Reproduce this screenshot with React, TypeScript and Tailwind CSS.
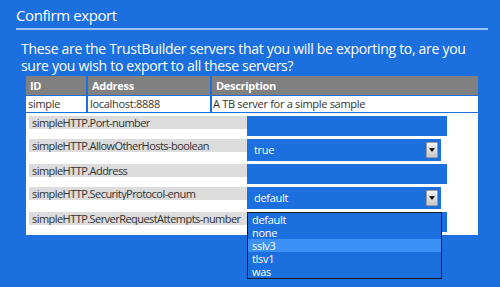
import React from "react";

const fields = [
  { label: "simpleHTTP.Port-number", kind: "input" },
  { label: "simpleHTTP.AllowOtherHosts-boolean", kind: "select", value: "true" },
  { label: "simpleHTTP.Address", kind: "input" },
  { label: "simpleHTTP.SecurityProtocol-enum", kind: "select", value: "default" },
  { label: "simpleHTTP.ServerRequestAttempts-number", kind: "input" },
];

const options = ["default", "none", "sslv3", "tlsv1", "was"];

function SelectArrow() {
  return (
    <div className="w-[12px] h-[16px] mr-[3px] rounded-[1px] bg-gradient-to-b from-[#f4f4f4] to-[#c8c8c8] border border-[#9a9a9a] flex items-center justify-center">
      <svg width="6" height="4" viewBox="0 0 6 4">
        <path d="M0 0h6L3 4z" fill="#111" />
      </svg>
    </div>
  );
}

export default function App() {
  return (
    <div
      className="w-[500px] h-[287px] bg-[#1b6fde] overflow-hidden text-white relative"
      style={{ fontFamily: '"Open Sans", "Noto Sans", sans-serif' }}
    >
      {/* Title */}
      <div className="px-[16px] pt-[4px]">
        <h2 className="text-[15px] tracking-[-0.4px] leading-[22px]">Confirm export</h2>
        <div className="h-[2px] w-[472px] bg-[#9ec3f2] mt-[2px]" />
      </div>

      <p className="ml-[21px] mt-[10px] text-[14px] tracking-[-0.3px] leading-[17px] w-[470px]">
        These are the TrustBuilder servers that you will be exporting to, are you sure you wish to export to all these servers?
      </p>

      {/* Servers table */}
      <div className="ml-[26px] mt-[2px] w-[452px] flex flex-col gap-[1px] text-[11px] tracking-[-0.3px]">
        <div className="flex gap-[2px] h-[19px] font-bold">
          <div className="w-[60px] bg-[#808080] px-[4px] leading-[19px]">ID</div>
          <div className="w-[122px] bg-[#808080] px-[4px] leading-[19px]">Address</div>
          <div className="flex-1 bg-[#808080] px-[4px] leading-[19px]">Description</div>
        </div>
        <div className="flex gap-[2px] h-[16px] text-[#333]">
          <div className="w-[60px] bg-white px-[2px] leading-[16px]">simple</div>
          <div className="w-[122px] bg-white px-[2px] leading-[16px]">localhost:8888</div>
          <div className="flex-1 bg-white px-[1px] leading-[16px]">A TB server for a simple sample</div>
        </div>

        {/* Server settings */}
        <div className="bg-white pt-[3px] pb-[3px] pl-[3px] flex flex-col gap-[3px]">
          {fields.map((f) => (
            <div key={f.label} className="flex items-start">
              <div className="w-[218px] bg-[#dcdcdc] text-[#333] pl-[3px] tracking-[-0.55px] leading-[13px] h-[13px] whitespace-nowrap overflow-hidden">
                {f.label}
              </div>
              {f.kind === "input" ? (
                <div className="w-[200px] h-[20px] bg-[#1b6fde]" />
              ) : (
                <div className="w-[194px] h-[22px] bg-[#1b6fde] flex items-center justify-between pl-[7px] text-white">
                  <span>{f.value}</span>
                  <SelectArrow />
                </div>
              )}
            </div>
          ))}
        </div>
      </div>

      {/* Open dropdown list */}
      <div className="absolute left-[247px] top-[212px] w-[195px] border border-[#1a1a1a] bg-[#1b6fde] text-[11px] tracking-[-0.3px] leading-[13px]">
        {options.map((o) => (
          <div key={o} className={`pl-[4px] h-[13px] ${o === "sslv3" ? "bg-[#3a90f4]" : ""}`}>
            {o}
          </div>
        ))}
      </div>
    </div>
  );
}
